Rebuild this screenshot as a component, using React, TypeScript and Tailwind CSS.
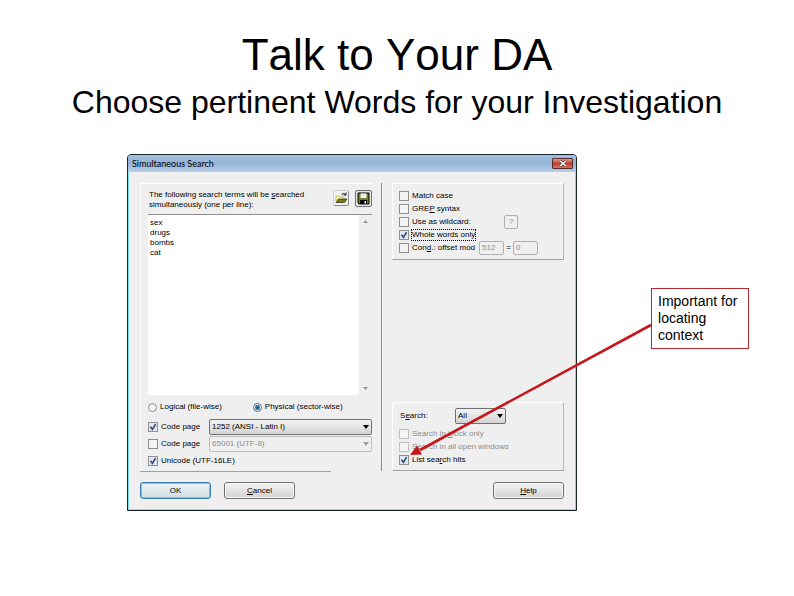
import { useState } from "react";
import type { ReactNode } from "react";

interface TickProps {
  id: string;
  checked?: boolean;
  disabled?: boolean;
  focused?: boolean;
  children: ReactNode;
}

function Tick({ id, checked = false, disabled = false, focused = false, children }: TickProps) {
  const [on, setOn] = useState(checked);

  return (
    <div className="flex h-[13px] items-center gap-[3px]">
      <span className="grid size-[10px] place-items-center">
        <input
          id={id}
          type="checkbox"
          checked={on}
          disabled={disabled}
          onChange={() => setOn(!on)}
          className="peer col-start-1 row-start-1 size-[10px] appearance-none border border-[#8e8f8f] bg-[#f4f4f4] checked:bg-[#dfe8f2] disabled:border-[#c0c0c0]"
        />
        <svg
          viewBox="0 0 10 10"
          className="pointer-events-none invisible col-start-1 row-start-1 size-[10px] peer-checked:visible"
        >
          <path d="M2.5 4.8 4.4 7.4 7.6 2.2" fill="none" stroke="#33456f" strokeWidth="1.6" />
        </svg>
      </span>
      <label
        htmlFor={id}
        className={
          disabled
            ? "whitespace-nowrap text-[#8c8c8c]"
            : focused
              ? "whitespace-nowrap outline-1 outline-dotted outline-black"
              : "whitespace-nowrap"
        }
      >
        {children}
      </label>
    </div>
  );
}

function Mode({ id, checked = false, children }: { id: string; checked?: boolean; children: ReactNode }) {
  return (
    <div className="flex items-center gap-[3px]">
      <input
        id={id}
        type="radio"
        name="mode"
        defaultChecked={checked}
        className="size-[9px] appearance-none rounded-full border border-[#8e8f8f] bg-[#f4f4f4] checked:border-[#5a7184] checked:bg-[radial-gradient(circle,#1d5a86_0,#2f7aa8_2px,#e6eef4_3px)]"
      />
      <label htmlFor={id}>{children}</label>
    </div>
  );
}

interface ComboProps {
  label: string;
  options: string[];
  disabled?: boolean;
}

function Combo({ label, options, disabled = false }: ComboProps) {
  return (
    <div className="relative w-full">
      <select
        aria-label={label}
        disabled={disabled}
        className="block h-4 w-full appearance-none rounded-[2px] border border-[#707070] bg-linear-to-b from-[#f3f3f3] to-[#d4d4d4] pl-0.5 text-black disabled:border-[#bcbcbc] disabled:bg-none disabled:text-[#8c8c8c] disabled:opacity-100"
      >
        {options.map((o) => (
          <option key={o}>{o}</option>
        ))}
      </select>
      <svg viewBox="0 0 6 4" className="pointer-events-none absolute top-1.5 right-[3px] h-1 w-1.5">
        <path d="M0 0h6L3 4z" fill={disabled ? "#a0a0a0" : "#000"} />
      </svg>
    </div>
  );
}

function PushButton({ primary = false, children }: { primary?: boolean; children: ReactNode }) {
  return (
    <button
      type="button"
      className={
        primary
          ? "h-[17px] w-[71px] rounded-[3px] border border-[#3c7fb1] bg-linear-to-b from-[#f0f4f6] to-[#cfdde5] inset-ring inset-ring-[#5fd0ef]"
          : "h-[17px] w-[71px] rounded-[3px] border border-[#707070] bg-linear-to-b from-[#f3f3f3] to-[#d2d2d2] inset-ring inset-ring-[#fafafa]"
      }
    >
      {children}
    </button>
  );
}

function SearchDialog() {
  return (
    <section className="w-[450px] overflow-hidden rounded-t-[4px] border border-[#16242c] bg-[#efefef] font-['Liberation_Sans',Arial,sans-serif] text-[8px] leading-[10px] text-black">
      <header className="flex h-[17px] items-center justify-between bg-linear-to-b from-[#a3bfdd] via-[#94b4d7] to-[#b7cfe8] pr-[3px] pl-1">
        <h2 className="font-[Lato,sans-serif] text-[9px]">Simultaneous Search</h2>
        <button
          type="button"
          aria-label="Close"
          className="flex h-[11px] w-[21px] items-center justify-center rounded-[1px] border border-[#5a2a2a] bg-linear-to-b from-[#dc9a8c] via-[#c03f2c] to-[#d0725c]"
        >
          <svg viewBox="0 0 8 7" className="h-[7px] w-2">
            <path d="M1 1 7 6M7 1 1 6" stroke="#5b3a3a" strokeWidth="2.8" />
            <path d="M1 1 7 6M7 1 1 6" stroke="#fff" strokeWidth="1.5" />
          </svg>
        </button>
      </header>

      <form className="border-x border-b border-[#7bdcf2] px-[11px] pt-[11px] pb-[10px]">
        <div className="flex">
          <div className="w-[232px] border-t border-l border-white pt-[6px] pb-1 pl-[7px]">
            <div className="flex items-start justify-between">
              <label htmlFor="terms" className="pl-px whitespace-nowrap">
                The following search terms will be <u>s</u>earched
                <br />
                simultaneously (one per line):
              </label>
              <div className="flex gap-1.5">
                <button
                  type="button"
                  aria-label="Open list"
                  className="flex size-4 items-center justify-center rounded-[2px] border border-[#8a8a8a] border-t-[#d0d0d0] border-l-[#d0d0d0] bg-[#f2f2f2]"
                >
                  <svg viewBox="0 0 14 14" className="size-[14px]">
                    <path d="M2 11V5h3l1 1h4v2" fill="#ffffa8" stroke="#b5b552" strokeWidth=".8" />
                    <path d="M2 11.5 4.5 8H13l-2.5 3.5z" fill="#7d7d13" stroke="#222" strokeWidth=".7" />
                    <path d="M7.5 3.5q2-2 4 0M12 1.5v2.5H9.5" fill="none" stroke="#111" />
                  </svg>
                </button>
                <button
                  type="button"
                  aria-label="Save list"
                  className="flex size-[17px] items-center justify-center rounded-[2px] border border-[#707070] bg-[#e6e6e6]"
                >
                  <svg viewBox="0 0 13 13" className="size-[13px]">
                    <path d="M1 1h11v11H2l-1-1z" fill="#77772d" stroke="#000" />
                    <path d="M3.5 1.5h6V6h-6z" fill="#f1f1f1" />
                    <path d="M3 8h7v4H3z" fill="#000" />
                    <path d="M7.5 9h1.5v2.5H7.5z" fill="#fff" />
                  </svg>
                </button>
              </div>
            </div>

            <div className="mt-1 flex h-[181px] border-t border-[#8f8f8f] bg-white">
              <textarea
                id="terms"
                defaultValue={"sex\ndrugs\nbombs\ncat"}
                className="min-w-0 flex-1 resize-none pt-[3px] pl-0.5 outline-none"
              />
              <div className="flex w-[13px] flex-col items-center justify-between bg-[#efefef] py-[5px]">
                <svg viewBox="0 0 5 3" className="h-[3px] w-[5px]">
                  <path d="M0 3h5L2.5 0z" fill="#999" />
                </svg>
                <svg viewBox="0 0 5 3" className="h-[3px] w-[5px]">
                  <path d="M0 0h5L2.5 3z" fill="#999" />
                </svg>
              </div>
            </div>

            <div className="flex h-6 items-center gap-[31px]">
              <Mode id="logical">Logical (file-wise)</Mode>
              <Mode id="physical" checked>
                Physical (sector-wise)
              </Mode>
            </div>
            <div className="grid grid-cols-[61px_1fr] items-center gap-y-px">
              <Tick id="page1" checked>
                Code page
              </Tick>
              <Combo label="First code page" options={["1252 (ANSI - Latin I)"]} />
              <Tick id="page2">Code page</Tick>
              <Combo label="Second code page" options={["65001 (UTF-8)"]} disabled />
            </div>
            <div className="pt-0.5">
              <Tick id="unicode" checked>
                Unicode (UTF-16LE)
              </Tick>
            </div>
          </div>

          <div className="ml-[9px] w-px bg-[#8c8c8c]" />

          <div className="ml-[10px] flex flex-1 flex-col justify-between">
            <fieldset className="border border-t-white border-r-[#b4b4b4] border-b-[#a0a0a0] border-l-white pt-[5px] pb-[5px] pl-1.5">
              <Tick id="case">Match case</Tick>
              <Tick id="grep">
                GRE<u>P</u> syntax
              </Tick>
              <div className="flex h-[13px] items-center">
                <div className="w-[105px]">
                  <Tick id="wild">Use as wildcard:</Tick>
                </div>
                <input
                  aria-label="Wildcard"
                  defaultValue="?"
                  disabled
                  className="h-[14px] w-[14px] rounded-[2px] border border-[#b0b0b0] text-center text-[#8c8c8c]"
                />
              </div>
              <Tick id="whole" checked focused>
                Whole words only
              </Tick>
              <div className="flex h-[13px] items-center">
                <div className="w-20">
                  <Tick id="cond">
                    Con<u>d</u>.: offset mod
                  </Tick>
                </div>
                <input
                  aria-label="Modulus"
                  defaultValue="512"
                  disabled
                  className="h-[14px] w-[25px] rounded-[2px] border border-[#b0b0b0] pl-0.5 text-[#8c8c8c]"
                />
                <span className="w-[9px] text-center">=</span>
                <input
                  aria-label="Remainder"
                  defaultValue="0"
                  disabled
                  className="h-[14px] w-[25px] rounded-[2px] border border-[#b0b0b0] pl-0.5 text-[#8c8c8c]"
                />
              </div>
            </fieldset>

            <fieldset className="border border-t-white border-r-[#b4b4b4] border-b-[#a0a0a0] border-l-white pt-[5px] pb-1 pl-1.5">
              <div className="mb-[3px] flex items-center">
                <span className="w-14 pl-px">
                  S<u>e</u>arch:
                </span>
                <div className="w-[51px]">
                  <Combo label="Search direction" options={["All"]} />
                </div>
              </div>
              <Tick id="block" disabled>
                Search in <u>b</u>lock only
              </Tick>
              <Tick id="windows" disabled>
                Search in all open windows
              </Tick>
              <Tick id="hits" checked>
                List sea<u>r</u>ch hits
              </Tick>
            </fieldset>
          </div>
        </div>

        <div className="h-px w-[191px] bg-[#a0a0a0]" />

        <div className="mt-[10px] flex gap-[13px]">
          <PushButton primary>OK</PushButton>
          <PushButton>
            <u>C</u>ancel
          </PushButton>
          <div className="ml-auto">
            <PushButton>
              <u>H</u>elp
            </PushButton>
          </div>
        </div>
      </form>
    </section>
  );
}

export default function App() {
  return (
    <main className="min-h-screen bg-white pt-[30px] font-['Liberation_Sans',Arial,sans-serif] text-black">
      <h1 className="text-center">
        <span className="block text-[44px] leading-[50px] [font-kerning:none]">Talk to Your DA</span>
        <span className="block text-[32px] leading-[44px]">Choose pertinent Words for your Investigation</span>
      </h1>

      <div className="pt-[30px] pl-[16%]">
        <div className="relative flex w-fit items-start gap-[74px]">
          <SearchDialog />
          <p className="mt-[134px] w-[98px] border border-[#b8282d] px-1.5 py-1 text-[14px] leading-[17px]">
            Important for locating context
          </p>
          <svg viewBox="0 0 242 134" className="pointer-events-none absolute top-[169px] left-[283px] h-[134px] w-[242px]">
            <path d="M241 2 10 127" stroke="#c4181c" strokeWidth="2.6" />
            <path d="M0 132 7 122.500 12 131.500z" fill="#c4181c" />
          </svg>
        </div>
      </div>
    </main>
  );
}
